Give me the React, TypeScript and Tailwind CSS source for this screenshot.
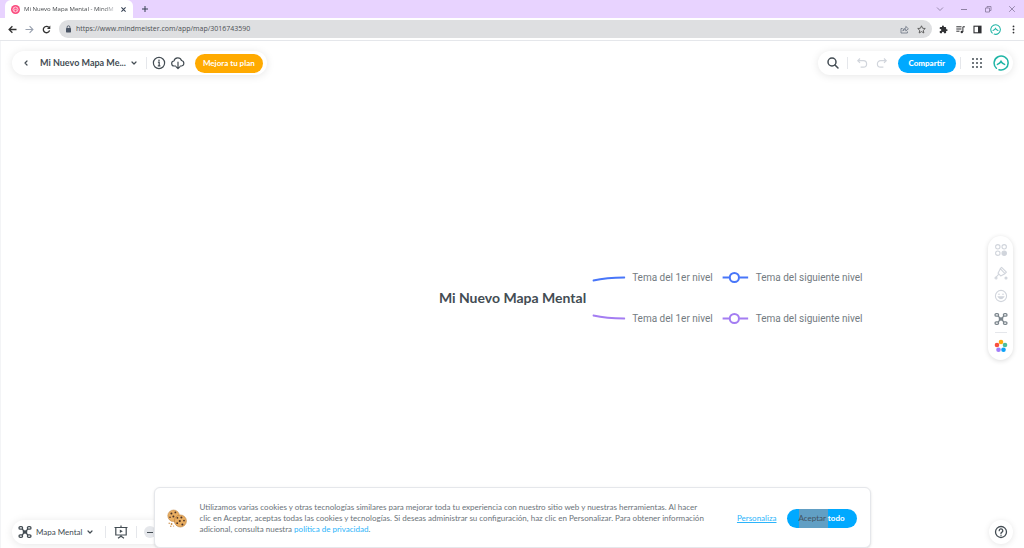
import React from 'react';

type IconProps = { className?: string };

const Chevron: React.FC<IconProps> = ({ className = '' }) => (
  <svg viewBox="0 0 8 8" className={className} fill="none" stroke="currentColor" strokeWidth="1.2" strokeLinecap="round" strokeLinejoin="round" aria-hidden="true">
    <path d="M2 3 L4 5 L6 3" />
  </svg>
);

const LogoCircle: React.FC<IconProps> = ({ className = '' }) => (
  <svg viewBox="0 0 16 16" className={className} fill="none" stroke="#1fb5a6" strokeWidth="1.5" strokeLinecap="round" aria-hidden="true">
    <path d="M3.4 13.2 A7 7 0 1 1 6 14.7 M8.6 15 A7 7 0 0 0 12.6 13.2" />
    <path d="M4.4 9.4 Q7 8.4 8 6.4 Q9 8.4 11.6 9.4" />
  </svg>
);

const MapIcon: React.FC<IconProps> = ({ className = '' }) => (
  <svg viewBox="0 0 14 14" className={className} fill="none" stroke="currentColor" strokeWidth="1.3" aria-hidden="true">
    <path d="M4 4 L10 10 M10 4 L4 10" />
    <rect x="4.8" y="5.4" width="4.4" height="3.2" rx="1" fill="currentColor" stroke="none" />
    <rect x="1" y="1.6" width="3.6" height="2.6" rx="1.3" />
    <rect x="9.4" y="1.6" width="3.6" height="2.6" rx="1.3" />
    <rect x="1" y="9.8" width="3.6" height="2.6" rx="1.3" />
    <rect x="9.4" y="9.8" width="3.6" height="2.6" rx="1.3" />
  </svg>
);

const Cookies: React.FC = () => (
  <svg viewBox="0 0 20 20" className="h-5 w-5 shrink-0" aria-hidden="true">
    <circle cx="6.6" cy="6.8" r="5.8" fill="#e9ae62" stroke="#b97a35" strokeWidth=".5" />
    <circle cx="13.4" cy="12" r="6" fill="#e9ae62" stroke="#b97a35" strokeWidth=".6" />
    <g fill="#493127">
      <circle cx="4.4" cy="4.4" r="1" />
      <circle cx="8.4" cy="3.4" r=".9" />
      <circle cx="3" cy="8.2" r=".8" />
      <circle cx="6.4" cy="7.6" r="1" />
      <circle cx="10.4" cy="8.8" r=".9" />
      <circle cx="14.4" cy="8.6" r="1" />
      <circle cx="12.8" cy="12" r="1.1" />
      <circle cx="17" cy="11.6" r=".9" />
      <circle cx="10.2" cy="14.2" r=".9" />
      <circle cx="15.4" cy="15.4" r="1" />
    </g>
    <g fill="#c98b45">
      <circle cx="2.2" cy="14.2" r=".7" />
      <circle cx="4.6" cy="15" r=".9" />
      <circle cx="3.8" cy="17.2" r=".7" />
      <circle cx="6.6" cy="17" r=".6" />
    </g>
  </svg>
);

const Divider: React.FC = () => <span className="h-3 w-px shrink-0 bg-gray-200" />;

const BrowserChrome: React.FC = () => (
  <header className="shrink-0 font-['Open_Sans',sans-serif]">
    <div className="flex h-[18px] items-center bg-[#e8d3ff] pl-[5px]">
      <div className="flex h-full w-[128px] items-center gap-1 rounded-t-md bg-white px-[6px]">
        <svg viewBox="0 0 10 10" className="h-[9px] w-[9px] shrink-0" aria-hidden="true">
          <circle cx="5" cy="5" r="5" fill="#fb4a7d" />
          <circle cx="5" cy="5" r="2.8" fill="none" stroke="#fff" strokeWidth=".8" />
          <path d="M3.6 6.4V4.8q.7-1.2 1.4 0q.7-1.2 1.4 0v1.6" fill="none" stroke="#fff" strokeWidth=".7" />
        </svg>
        <span className="flex-1 whitespace-nowrap bg-linear-to-r from-[#3c4043] from-85% to-gray-200 bg-clip-text text-[6px] leading-[10px] text-transparent">Mi Nuevo Mapa Mental - MindM</span>
        <button aria-label="Cerrar pestaña" className="shrink-0 text-gray-700">
          <svg viewBox="0 0 8 8" className="h-[7px] w-[7px]" stroke="currentColor" strokeWidth="1.2"><path d="M1.6 1.6 L6.4 6.4 M6.4 1.6 L1.6 6.4" /></svg>
        </button>
      </div>
      <button aria-label="Nueva pestaña" className="ml-2 text-gray-700">
        <svg viewBox="0 0 8 8" className="h-2 w-2" stroke="currentColor" strokeWidth="1"><path d="M4 1 V7 M1 4 H7" /></svg>
      </button>
      <div className="ml-auto flex items-center gap-4 pr-2 text-[#85779a]">
        <button aria-label="Buscar pestañas"><svg viewBox="0 0 8 8" className="h-2 w-2" fill="none" stroke="currentColor" strokeWidth=".8"><path d="M1 2.5 L4 5.5 L7 2.5" /></svg></button>
        <button aria-label="Minimizar"><svg viewBox="0 0 8 8" className="h-2 w-2" stroke="currentColor" strokeWidth=".9"><path d="M1 4.5 H7" /></svg></button>
        <button aria-label="Restaurar"><svg viewBox="0 0 8 8" className="h-2 w-2" fill="none" stroke="currentColor" strokeWidth=".8"><path d="M1.5 3 H5.5 V7 H1.5 Z M3 3 V1.5 H7 V5.5 H5.5" /></svg></button>
        <button aria-label="Cerrar"><svg viewBox="0 0 8 8" className="h-2 w-2" stroke="currentColor" strokeWidth=".8"><path d="M1.2 1.2 L6.8 6.8 M6.8 1.2 L1.2 6.8" /></svg></button>
      </div>
    </div>
    <div className="flex h-[23px] items-center border-b border-gray-200 bg-white pl-2 pr-[6px]">
      <div className="flex items-center gap-2 text-[#333]">
        <button aria-label="Atrás"><svg viewBox="0 0 9 9" className="h-[9px] w-[9px]" fill="none" stroke="currentColor" strokeWidth="1.3"><path d="M8.5 4.5 H1.2 M4.4 1.2 L1.1 4.5 L4.4 7.8" /></svg></button>
        <button aria-label="Adelante" className="text-gray-400"><svg viewBox="0 0 9 9" className="h-[9px] w-[9px]" fill="none" stroke="currentColor" strokeWidth="1.1"><path d="M.5 4.5 H7.8 M4.6 1.2 L7.9 4.5 L4.6 7.8" /></svg></button>
        <button aria-label="Recargar"><svg viewBox="0 0 9 9" className="h-[9px] w-[9px]" fill="none" stroke="currentColor" strokeWidth="1.3"><path d="M7.6 5.4 A3.2 3.2 0 1 1 6.9 2.4" /><path d="M8.3 .6 V3.9 H5 Z" fill="currentColor" stroke="none" /></svg></button>
      </div>
      <div className="ml-2 flex h-[18px] flex-1 items-center rounded-full bg-[#dedfe1] px-[6px]">
        <svg viewBox="0 0 7 8" className="h-2 w-[7px] shrink-0 text-gray-600" aria-hidden="true"><rect x="1" y="3" width="5" height="4.4" rx=".6" fill="currentColor" /><path d="M2.1 3.2 V2.2 a1.4 1.4 0 0 1 2.8 0 V3.2" fill="none" stroke="currentColor" strokeWidth=".9" /></svg>
        <input
          aria-label="Dirección"
          defaultValue="https://www.mindmeister.com/app/map/3016743590"
          className="ml-1 min-w-0 flex-1 bg-transparent text-[7px] leading-[10px] text-[#4d5054] outline-none"
        />
        <div className="flex items-center gap-2 text-gray-500">
          <button aria-label="Compartir página"><svg viewBox="0 0 9 9" className="h-[9px] w-[9px]" fill="none" stroke="currentColor" strokeWidth=".8"><path d="M2.6 3.5 H1 V8 H7.4 V6.4" /><path d="M2.8 6 Q3 3.3 5.8 3.2 V1.4 L8.4 3.8 L5.8 6 V4.5 Q4 4.4 2.8 6 Z" /></svg></button>
          <button aria-label="Marcador"><svg viewBox="0 0 10 10" className="h-[9px] w-[9px]" fill="none" stroke="#555" strokeWidth="1"><path d="M5 .9 L6.2 3.6 L9.2 3.9 L7 5.9 L7.6 8.9 L5 7.3 L2.4 8.9 L3 5.9 L.8 3.9 L3.8 3.6 Z" /></svg></button>
        </div>
      </div>
      <div className="ml-[7px] flex items-center gap-2 text-[#303134]">
        <button aria-label="Extensiones"><svg viewBox="0 0 24 24" className="h-[9px] w-[9px]" fill="currentColor"><path d="M20.5 11H19V7a2 2 0 0 0-2-2h-4V3.5a2.5 2.5 0 0 0-5 0V5H4a2 2 0 0 0-2 2v3.8h1.5a2.7 2.7 0 0 1 0 5.4H2V20a2 2 0 0 0 2 2h3.8v-1.5a2.7 2.7 0 0 1 5.4 0V22H17a2 2 0 0 0 2-2v-4h1.5a2.5 2.5 0 0 0 0-5z" /></svg></button>
        <button aria-label="Multimedia"><svg viewBox="0 0 9 9" className="h-[9px] w-[9px]" fill="none" stroke="currentColor"><path d="M.3 1.8 H5.5 M.3 4 H5.5 M.3 6.2 H3.5 M6.9 7 V1.8 H8.9" /><circle cx="5.8" cy="7" r="1.2" fill="currentColor" stroke="none" /></svg></button>
        <button aria-label="Panel lateral"><svg viewBox="0 0 9 9" className="h-[9px] w-[9px]"><rect x="1" y="1.2" width="7" height="6.6" fill="none" stroke="currentColor" strokeWidth="1.1" /><rect x="5" y="1" width="3" height="7" fill="currentColor" /></svg></button>
        <button aria-label="Perfil"><LogoCircle className="h-[11px] w-[11px]" /></button>
        <button aria-label="Menú"><svg viewBox="0 0 9 9" className="h-[9px] w-[9px]" fill="currentColor"><circle cx="4.5" cy="1.4" r=".9" /><circle cx="4.5" cy="4.5" r=".9" /><circle cx="4.5" cy="7.6" r=".9" /></svg></button>
      </div>
    </div>
  </header>
);

const TopLeftBar: React.FC = () => (
  <div className="flex h-6 items-center rounded-full bg-white pl-[10px] pr-1 shadow-[0_1px_8px_rgba(0,0,0,0.1)]">
    <button aria-label="Volver"><Chevron className="h-2 w-2 rotate-90" /></button>
    <button className="ml-[10px] flex items-center gap-1 text-[9px] font-bold leading-3">
      Mi Nuevo Mapa Me...
      <Chevron className="h-2 w-2" />
    </button>
    <span className="ml-2 flex items-center gap-[5px]">
      <Divider />
      <button aria-label="Información">
        <svg viewBox="0 0 14 14" className="h-[14px] w-[14px]" fill="none" stroke="currentColor" strokeWidth="1.2"><circle cx="7" cy="7" r="5.6" /><path d="M5.9 6.2 H7.2 V9.8 M5.8 9.9 H8.4" /><circle cx="7" cy="4.2" r=".8" fill="currentColor" stroke="none" /></svg>
      </button>
      <button aria-label="Descargar">
        <svg viewBox="0 0 14 14" className="h-[14px] w-[14px]" fill="none" stroke="currentColor" strokeWidth="1.2" strokeLinecap="round" strokeLinejoin="round"><path d="M4.6 10 H3.4 A2.5 2.5 0 0 1 3 5 A3.9 3.9 0 0 1 10.5 4.5 A2.8 2.8 0 0 1 10.6 10 H9.4 M7 6.2 V12.4 M5.2 10.8 L7 12.6 L8.8 10.8" /></svg>
      </button>
    </span>
    <button className="ml-[10px] h-[19px] rounded-full bg-[#ffaa00] px-2 text-[8px] font-bold leading-3 text-white">Mejora tu plan</button>
  </div>
);

const TopRightBar: React.FC = () => (
  <div className="flex h-6 items-center rounded-full bg-white pl-2 pr-1 shadow-[0_1px_8px_rgba(0,0,0,0.1)]">
    <button aria-label="Buscar">
      <svg viewBox="0 0 14 14" className="h-[14px] w-[14px]" fill="none" stroke="currentColor" strokeWidth="1.5" strokeLinecap="round"><circle cx="6" cy="6" r="4" /><path d="M9 9 L12 12" /></svg>
    </button>
    <span className="ml-[7px] flex items-center gap-2">
      <Divider />
      <button aria-label="Deshacer" className="text-gray-300"><svg viewBox="0 0 12 12" className="h-3 w-3" fill="none" stroke="currentColor" strokeWidth="1.2"><path d="M4 1.5 L1.8 3.7 L4 5.9 M2 3.7 H7.4 A3.2 3.2 0 0 1 7.4 10.1 H4.6" /></svg></button>
      <button aria-label="Rehacer" className="text-gray-300"><svg viewBox="0 0 12 12" className="h-3 w-3" fill="none" stroke="currentColor" strokeWidth="1.2"><path d="M8 1.5 L10.2 3.7 L8 5.9 M10 3.7 H4.6 A3.2 3.2 0 0 0 4.6 10.1 H7.4" /></svg></button>
    </span>
    <button className="ml-[10px] h-[19px] rounded-full bg-[#00a9ff] px-[11px] text-[8px] font-black leading-3 text-white">Compartir</button>
    <span className="ml-1 flex items-center gap-[11px]">
      <Divider />
      <button aria-label="Aplicaciones">
        <svg viewBox="0 0 10 10" className="h-[10px] w-[10px]" fill="currentColor">
          {[1, 5, 9].map(y => [1, 5, 9].map(x => <circle key={`${x}-${y}`} cx={x} cy={y} r="1" />))}
        </svg>
      </button>
      <button aria-label="Cuenta"><LogoCircle className="h-4 w-4" /></button>
    </span>
  </div>
);

const SideTools: React.FC = () => (
  <div className="flex w-[25px] flex-col items-center gap-[6px] rounded-full bg-white py-[7px] text-gray-300 shadow-[0_1px_5px_rgba(0,0,0,0.14)]">
    <div className="flex flex-col items-center gap-[9px]">
      <button aria-label="Estilo">
        <svg viewBox="0 0 14 14" className="h-[14px] w-[14px]" fill="none" stroke="currentColor" strokeWidth="1.1"><circle cx="3.8" cy="3.8" r="2.2" /><circle cx="10.2" cy="3.8" r="2.2" /><circle cx="3.8" cy="10.2" r="2.2" /><circle cx="10.2" cy="10.2" r="2.2" fill="currentColor" /></svg>
      </button>
      <button aria-label="Formato">
        <svg viewBox="0 0 14 14" className="h-[14px] w-[14px]" fill="none" stroke="currentColor" strokeWidth="1.1" strokeLinejoin="round"><path d="M7.6 1.3 L12.4 6.2 L11 7.6 L6.2 2.7 Z M6.2 2.9 L4 7.2 L6.7 9.9 L10.9 7.7 M4.8 8.2 L1.7 11.6" /><circle cx="2" cy="12" r="1" /><circle cx="12" cy="12" r="1" fill="currentColor" /></svg>
      </button>
      <button aria-label="Emoji">
        <svg viewBox="0 0 14 14" className="h-[14px] w-[14px]" fill="none" stroke="currentColor" strokeWidth="1.1"><circle cx="7" cy="7" r="5.6" /><path d="M4.4 7.9 Q7 11.4 9.6 7.9 Z" fill="currentColor" /><circle cx="5" cy="5.3" r=".8" fill="currentColor" stroke="none" /><circle cx="9" cy="5.3" r=".8" fill="currentColor" stroke="none" /></svg>
      </button>
      <button aria-label="Diseño" className="text-[#7b858c]"><MapIcon className="h-[14px] w-[14px]" /></button>
    </div>
    <span className="h-px w-3 bg-gray-200" />
    <button aria-label="Plantillas">
      <svg viewBox="0 0 14 14" className="h-[14px] w-[14px]">
        <circle cx="7" cy="3" r="2.3" fill="#ffab0b" />
        <circle cx="11" cy="6" r="2.3" fill="#4dbd9a" />
        <circle cx="9.5" cy="10.8" r="2.3" fill="#0da2f7" />
        <circle cx="4.5" cy="10.8" r="2.3" fill="#a17df8" />
        <circle cx="3" cy="6" r="2.3" fill="#f9503f" />
      </svg>
    </button>
  </div>
);

const BRANCHES = [
  { color: '#4876f9', curve: 'M1 8 Q14 5 32 5' },
  { color: '#a47df2', curve: 'M1 2 Q14 5 32 5' },
];

const MindMap: React.FC = () => (
  <div className="absolute left-1/2 top-1/2 mt-[3px] -translate-x-1/2 -translate-y-1/2">
    <h1 className="whitespace-nowrap text-[14px] font-bold leading-4 text-[#434c53]">Mi Nuevo Mapa Mental</h1>
    <div className="absolute left-full top-1/2 ml-[6px] flex -translate-y-1/2 flex-col gap-[25px]">
      {BRANCHES.map(branch => (
        <div key={branch.color} className="flex items-center whitespace-nowrap font-['Roboto',sans-serif] text-[10px] leading-4 text-[#737b81]">
          <svg viewBox="0 0 33 10" className="h-[10px] w-[33px] shrink-0" fill="none" stroke={branch.color} strokeWidth="2" strokeLinecap="round" aria-hidden="true"><path d={branch.curve} /></svg>
          <span className="ml-[7px]">Tema del 1er nivel</span>
          <svg viewBox="0 0 26 12" className="ml-[10px] mr-[7px] h-3 w-[26px] shrink-0" fill="none" stroke={branch.color} strokeWidth="2" aria-hidden="true"><path d="M0 6 H7 M17 6 H26" /><circle cx="12" cy="6" r="4.6" /></svg>
          <span>Tema del siguiente nivel</span>
        </div>
      ))}
    </div>
  </div>
);

const BottomBar: React.FC = () => (
  <div className="flex h-6 items-center rounded-full bg-white pl-[6px] pr-2 shadow-[0_1px_8px_rgba(0,0,0,0.1)]">
    <button className="flex items-center text-[8px] leading-3">
      <MapIcon className="mr-1 h-[14px] w-[14px]" />
      Mapa Mental
      <Chevron className="ml-1 h-2 w-2" />
    </button>
    <span className="ml-[11px] flex items-center gap-2">
      <Divider />
      <button aria-label="Presentación">
        <svg viewBox="0 0 14 14" className="h-[14px] w-[14px]" fill="none" stroke="currentColor" strokeWidth="1.2"><path d="M.5 2.5 H13.5 M1.8 2.5 V10 H12.2 V2.5 M7 .6 V2.5 M7 10 V11.5 M4 13.2 L7 11.2 L10 13.2" /><path d="M5.8 4.4 L8.8 6.2 L5.8 8 Z" fill="currentColor" stroke="none" /></svg>
      </button>
      <Divider />
    </span>
    <button aria-label="Alejar" className="ml-[7px] flex h-3 w-3 items-center justify-center rounded-full bg-gray-200">
      <span className="h-px w-[6px] bg-current" />
    </button>
  </div>
);

const CookieBanner: React.FC = () => (
  <section aria-label="Cookies" className="absolute inset-x-0 bottom-0 mx-auto flex w-[70%] items-center rounded-md border border-gray-200 bg-white pb-3 pl-3 pr-[13px] pt-[14px] shadow-sm">
    <Cookies />
    <p className="ml-3 max-w-[508px] flex-1 text-[8px] leading-[11px] text-[#6b7379]">
      Utilizamos varias cookies y otras tecnologías similares para mejorar toda tu experiencia con nuestro sitio web y nuestras herramientas. Al hacer clic en Aceptar, aceptas todas las cookies y tecnologías. Si deseas administrar su configuración, haz clic en Personalizar. Para obtener información adicional, consulta nuestra <a href="#privacidad" className="text-[#2bb4fb]">política de privacidad</a>.
    </p>
    <a href="#personaliza" className="ml-auto text-[8px] leading-[11px] text-[#2bb4fb] underline">Personaliza</a>
    <button className="ml-[10px] h-[19px] rounded-full bg-[#00a9ff] px-3 text-[8px] font-bold leading-[19px] text-white">
      <span className="inline-block bg-[#619fc4] font-normal text-[#42525f]">Aceptar&nbsp;</span>todo
    </button>
  </section>
);

const App: React.FC = () => {
  return (
    <div className="flex h-screen flex-col overflow-hidden bg-white">
      <BrowserChrome />
      <main className="relative flex flex-1 flex-col justify-between border-l border-gray-100 px-[11px] pb-1 pt-[10px] font-['Lato',sans-serif] text-[#434c53]">
        <MindMap />
        <div className="flex items-center justify-between">
          <TopLeftBar />
          <TopRightBar />
        </div>
        <div className="flex justify-end">
          <SideTools />
        </div>
        <div className="flex items-center justify-between">
          <BottomBar />
          <button aria-label="Ayuda" className="flex h-6 w-6 items-center justify-center rounded-full bg-white shadow-[0_1px_6px_rgba(0,0,0,0.1)]">
            <svg viewBox="0 0 14 14" className="h-[14px] w-[14px]" fill="none" stroke="currentColor" strokeWidth="1.3" strokeLinecap="round"><circle cx="7" cy="7" r="5.5" /><path d="M5.2 5.7 A1.8 1.8 0 1 1 7.6 7.4 Q7 7.7 7 8.4" /><circle cx="7" cy="10.2" r=".7" fill="currentColor" stroke="none" /></svg>
          </button>
        </div>
        <CookieBanner />
      </main>
    </div>
  );
};

export default App;
